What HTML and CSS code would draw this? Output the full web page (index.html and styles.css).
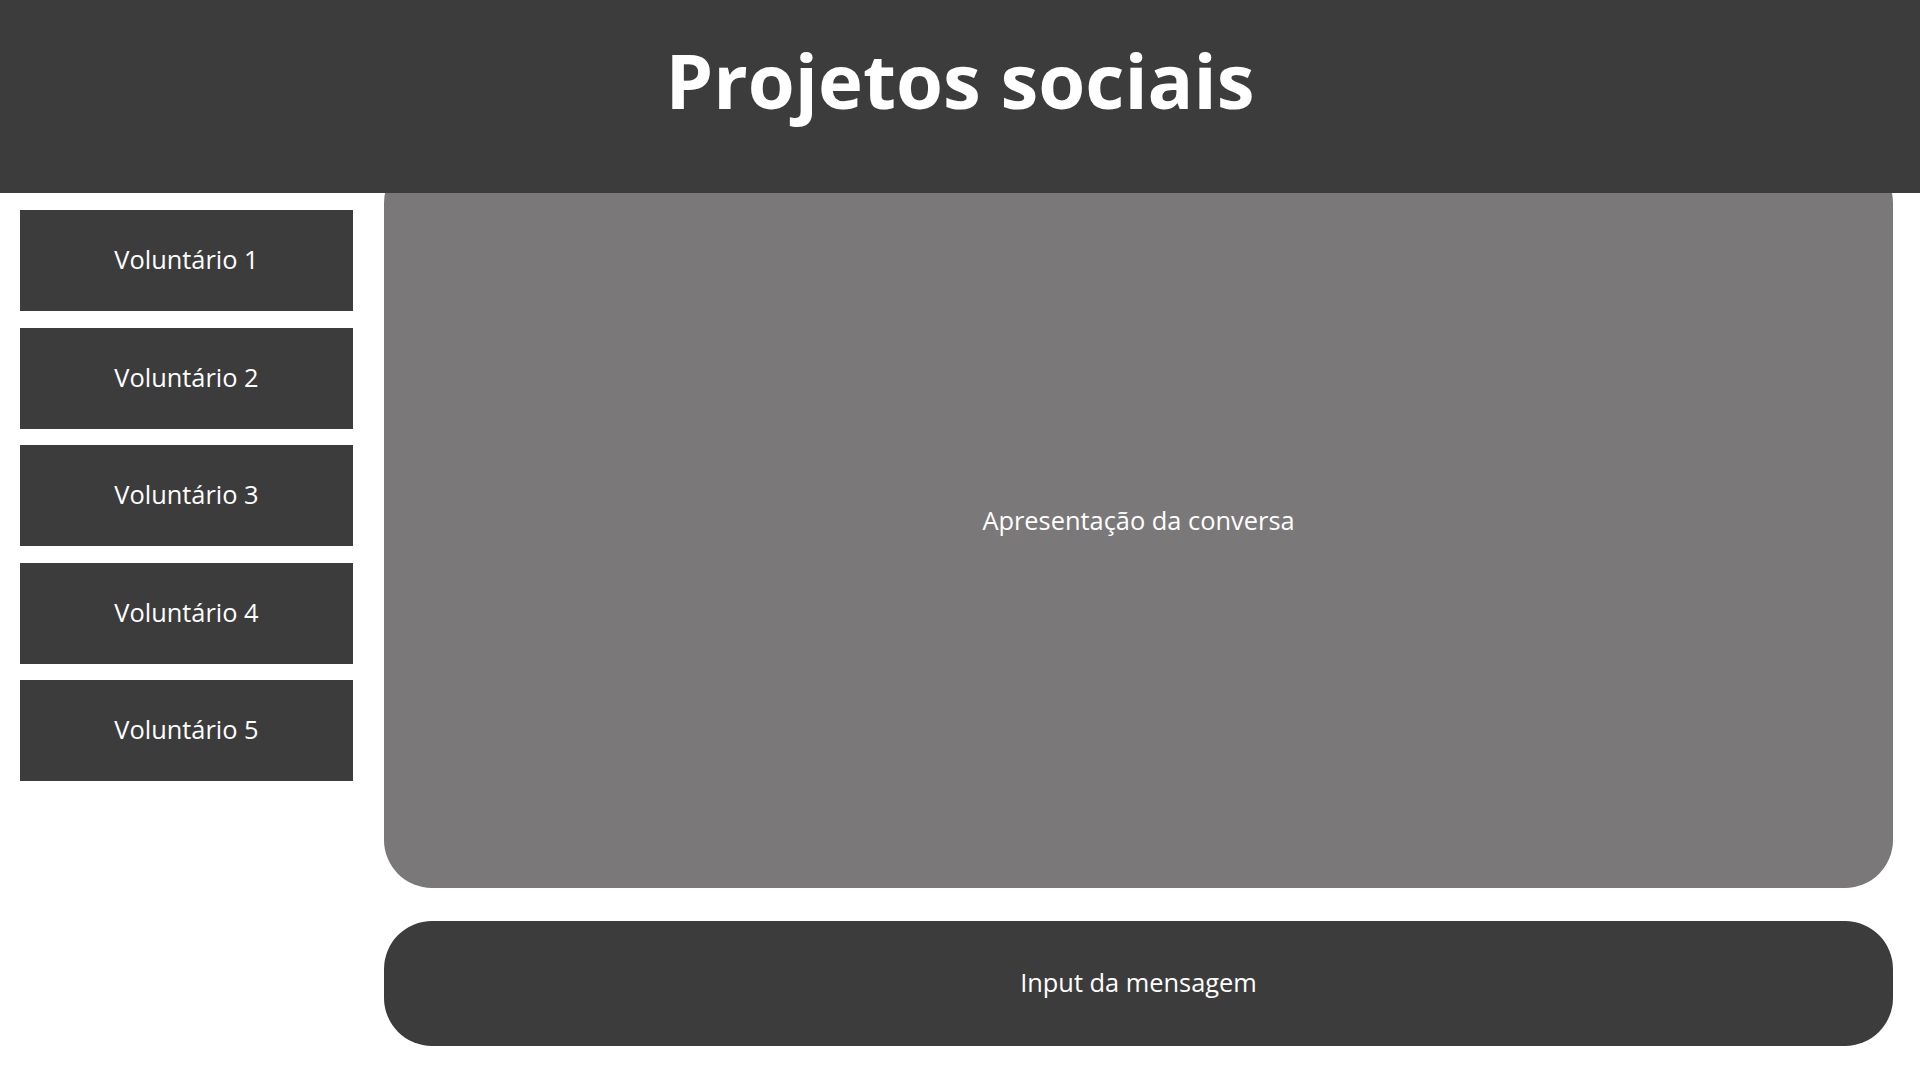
FILE: index.html
```html
<!DOCTYPE html>
<html lang="pt-BR">
<head>
<meta charset="utf-8">
<title>Projetos sociais</title>
<link rel="stylesheet" href="styles.css">
</head>
<body>
<header class="topbar">
  <h1 class="title">Projetos sociais</h1>
</header>
<div class="content">
  <nav class="sidebar">
    <div class="volunteer">Voluntário 1</div>
    <div class="volunteer">Voluntário 2</div>
    <div class="volunteer">Voluntário 3</div>
    <div class="volunteer">Voluntário 4</div>
    <div class="volunteer">Voluntário 5</div>
  </nav>
  <main class="main">
    <section class="chat">Apresentação da conversa</section>
    <div class="message-input">Input da mensagem</div>
  </main>
</div>
</body>
</html>
```

FILE: styles.css
```css
html, body {
  margin: 0;
  padding: 0;
  background: #ffffff;
}

body {
  font-family: "Open Sans", "Noto Sans", sans-serif;
  color: #ffffff;
  width: 1920px;
  height: 1080px;
  overflow: hidden;
}

.topbar {
  position: relative;
  z-index: 1;
  height: 193px;
  box-sizing: border-box;
  padding-top: 28px;
  background: #3c3c3c;
  text-align: center;
}

.title {
  margin: 0;
  font-size: 76px;
  font-weight: 700;
  line-height: 1.362;
  color: #ffffff;
}

.content {
  display: flex;
  gap: 31px;
  padding: 0 27px 0 20px;
}

.sidebar {
  width: 333px;
  flex: none;
  padding-top: 17px;
  display: flex;
  flex-direction: column;
  gap: 16.5px;
}

.volunteer {
  height: 101px;
  box-sizing: border-box;
  padding-bottom: 3px;
  background: #3c3c3c;
  display: flex;
  align-items: center;
  justify-content: center;
  font-size: 25.4px;
}

.main {
  flex: 1;
  margin-top: -38px;
  display: flex;
  flex-direction: column;
  gap: 33px;
}

.chat {
  height: 733px;
  box-sizing: border-box;
  padding-bottom: 3px;
  background: #7a7879;
  border-radius: 48px;
  display: flex;
  align-items: center;
  justify-content: center;
  font-size: 25.4px;
}

.message-input {
  height: 125px;
  box-sizing: border-box;
  padding-bottom: 3px;
  background: #3c3c3c;
  border-radius: 48px;
  display: flex;
  align-items: center;
  justify-content: center;
  font-size: 25.4px;
}
```
